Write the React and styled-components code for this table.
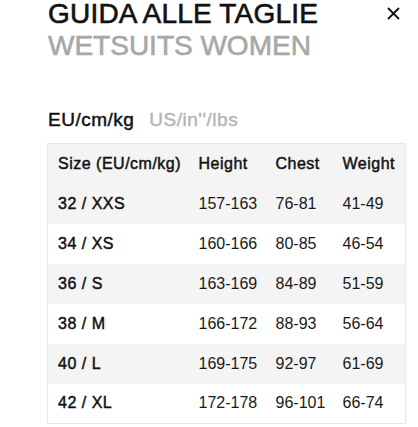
import React, { useState } from 'react'
import styled, { createGlobalStyle, css } from 'styled-components';

const GlobalStyle = createGlobalStyle`
  body {
    margin: 0;
    background: #fff;
    font-family: "Liberation Sans", Arial, sans-serif;
    color: #111;
  }
`;

// Helvetica-medium look: regular face thickened a little
const medium = css`
  font-weight: 400;
  -webkit-text-stroke: 0.45px currentColor;
`;

const sizes = [
  { size: '32 / XXS', height: '157-163', chest: '76-81', weight: '41-49' },
  { size: '34 / XS', height: '160-166', chest: '80-85', weight: '46-54' },
  { size: '36 / S', height: '163-169', chest: '84-89', weight: '51-59' },
  { size: '38 / M', height: '166-172', chest: '88-93', weight: '56-64' },
  { size: '40 / L', height: '169-175', chest: '92-97', weight: '61-69' },
  { size: '42 / XL', height: '172-178', chest: '96-101', weight: '66-74' },
];

function App() {
  const [unit, setUnit] = useState('eu');
  return (
    <Container>
      <GlobalStyle />
      <Header>
        <TitleBlock>
          <Title>GUIDA ALLE TAGLIE</Title>
          <SubTitle>WETSUITS WOMEN</SubTitle>
        </TitleBlock>
        <CloseButton aria-label="close">
          <svg width="13" height="13" viewBox="0 0 13 13">
            <path d="M1 1L12 12M12 1L1 12" stroke="#111" strokeWidth="1.8" fill="none" />
          </svg>
        </CloseButton>
      </Header>
      <Tabs>
        <Tab $active={unit === 'eu'} onClick={() => setUnit('eu')}>EU/cm/kg</Tab>
        <Tab $active={unit === 'us'} onClick={() => setUnit('us')}>US/in''/lbs</Tab>
      </Tabs>
      <Table>
        <colgroup>
          <col style={{ width: '141px' }} />
          <col style={{ width: '77px' }} />
          <col style={{ width: '67px' }} />
          <col />
        </colgroup>
        <thead>
          <Row $shaded>
            <HeadCell>Size (EU/cm/kg)</HeadCell>
            <HeadCell>Height</HeadCell>
            <HeadCell>Chest</HeadCell>
            <HeadCell>Weight</HeadCell>
          </Row>
        </thead>
        <tbody>
          {sizes.map((s, i) => (
            <Row key={s.size} $shaded={i % 2 === 0}>
              <SizeCell>{s.size}</SizeCell>
              <Cell>{s.height}</Cell>
              <Cell>{s.chest}</Cell>
              <Cell>{s.weight}</Cell>
            </Row>
          ))}
        </tbody>
      </Table>
    </Container>
  )
}

const Container = styled.div`
  padding: 0 12px 0 47px;
`;
const Header = styled.div`
  display: flex;
  justify-content: space-between;
  align-items: flex-start;
`;
const TitleBlock = styled.div`
  padding-left: 1px;
`;
const Title = styled.h1`
  margin: 0;
  font-size: 28px;
  line-height: 28px;
  ${medium}
  -webkit-text-stroke-width: 0.6px;
  letter-spacing: 0.2px;
  color: #111;
`;
const SubTitle = styled.h2`
  margin: 2px 0 0;
  font-size: 28px;
  line-height: 32px;
  ${medium}
  -webkit-text-stroke-width: 0.6px;
  letter-spacing: 0;
  color: #a8a8a8;
`;
const CloseButton = styled.button`
  border: none;
  background: none;
  padding: 0;
  margin: 7px 6px 0 0;
  width: 13px;
  height: 13px;
  display: flex;
  cursor: pointer;
`;
const Tabs = styled.div`
  display: flex;
  gap: 15px;
  margin-top: 46px;
  padding-left: 1px;
`;
const Tab = styled.span`
  font-size: 19px;
  line-height: 24px;
  ${medium}
  letter-spacing: 0.5px;
  color: ${p => (p.$active ? '#111' : '#b5b5b5')};
  cursor: pointer;
`;
const Table = styled.table`
  margin-top: 11px;
  width: 100%;
  border-collapse: collapse;
  border: 1px solid #e8e8e8;
  table-layout: fixed;
`;
const Row = styled.tr`
  height: 40px;
  background: ${p => (p.$shaded ? '#f4f4f4' : '#fff')};
`;
const HeadCell = styled.th`
  padding: 0 0 0 10px;
  text-align: left;
  font-size: 16px;
  ${medium}
  letter-spacing: 0.5px;
  color: #111;
  white-space: nowrap;
`;
const SizeCell = styled.td`
  padding: 0 0 0 10px;
  font-size: 16px;
  ${medium}
  letter-spacing: 0.5px;
  color: #111;
  white-space: nowrap;
`;
const Cell = styled.td`
  padding: 0 0 0 10px;
  font-size: 16px;
  color: #1a1a1a;
  white-space: nowrap;
`;

export default App;
